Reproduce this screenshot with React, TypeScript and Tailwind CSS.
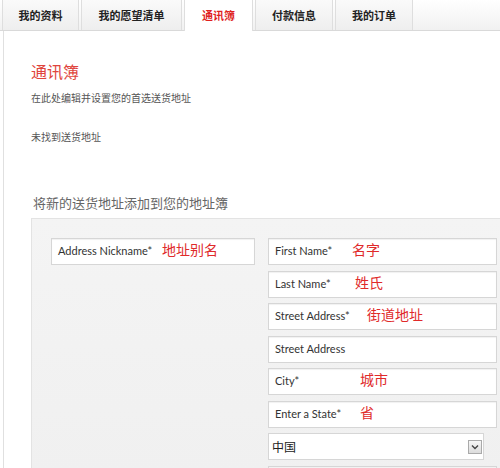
import React from "react";

const tabs = [
  { label: "我的资料", w: "w-[77px]", active: false },
  { label: "我的愿望清单", w: "w-[101px]", active: false },
  { label: "通讯簿", w: "w-[69px]", active: true },
  { label: "付款信息", w: "w-[78px]", active: false },
  { label: "我的订单", w: "w-[78px]", active: false },
];

const cjk = "font-['Noto_Sans_CJK_SC',sans-serif]";
const lat = "font-['Lato','Noto_Sans_CJK_SC',sans-serif]";

function Field({ label, note, offset }: { label: string; note?: string; offset?: string }) {
  return (
    <div className="relative flex h-[27px] shrink-0 items-center border border-[#d6d6d6] bg-white pl-[6px] shadow-[inset_0_1px_1px_rgba(0,0,0,0.06)]">
      <span className={`${lat} text-[11px] text-[#333]`}>{label}</span>
      {note && (
        <span className={`absolute top-[1px] ${offset} ${cjk} text-[14px] leading-[18px] text-[#e02a2a]`}>{note}</span>
      )}
    </div>
  );
}

export default function App() {
  return (
    <div className="h-[468px] w-[500px] overflow-hidden bg-white">
      <div className="flex h-[31px] items-stretch border-b border-[#d9d9d9] bg-gradient-to-b from-white to-[#f1f1f1] pl-[2px]">
        {tabs.map((t, i) => (
          <div
            key={t.label}
            className={`${t.w} ${i > 0 ? "ml-[2px]" : ""} flex items-center justify-center border-x border-[#dedede] ${
              t.active ? "-mb-px bg-white text-[#e01f1f]" : "bg-gradient-to-b from-[#fafafa] to-[#eeeeee] text-[#222]"
            } ${cjk} text-[11px] font-bold`}
          >
            {t.label}
          </div>
        ))}
      </div>
      <div className="ml-[3px] h-full border-l border-[#e0e0e0] pl-[27px]">
        <div className={`${cjk} pt-[30px] text-[16px] leading-[20px] text-[#e0453d]`}>通讯簿</div>
        <div className={`${cjk} mt-[10px] text-[10px] leading-[14px] text-[#555]`}>在此处编辑并设置您的首选送货地址</div>
        <div className={`${cjk} mt-[25px] text-[10px] leading-[14px] text-[#555]`}>未找到送货地址</div>
        <div className={`${cjk} ml-[2px] mt-[50px] text-[13px] leading-[18px] text-[#666]`}>将新的送货地址添加到您的地址簿</div>
        <div className="mt-[6px] flex h-[320px] items-start gap-[13px] border-l border-t border-[#e3e3e3] bg-gradient-to-b from-[#f4f4f4] to-[#efefef] pl-[19px] pt-[19px]">
          <div className="w-[204px]">
            <Field label="Address Nickname*" note="地址别名" offset="left-[110px]" />
          </div>
          <div className="flex w-[229px] flex-col gap-[5.5px]">
            <Field label="First Name*" note="名字" offset="left-[83px]" />
            <Field label="Last Name*" note="姓氏" offset="left-[86px]" />
            <Field label="Street Address*" note="街道地址" offset="left-[98px]" />
            <Field label="Street Address" />
            <Field label="City*" note="城市" offset="left-[91px]" />
            <Field label="Enter a State*" note="省" offset="left-[91px]" />
            <div className="flex h-[27px] w-[216px] shrink-0 items-center justify-between border border-[#d6d6d6] bg-white pl-[3px] pr-[1px]">
              <span className={`${cjk} text-[12px] text-[#222]`}>中国</span>
              <span className="flex h-[14px] w-[14px] items-center justify-center border border-[#aaa] bg-gradient-to-b from-[#f6f6f6] to-[#dcdcdc]">
                <svg width="8" height="6" viewBox="0 0 8 6">
                  <path d="M1 1.5 L4 4.5 L7 1.5" fill="none" stroke="#444" strokeWidth="1.4" />
                </svg>
              </span>
            </div>
            <Field label="" />
          </div>
        </div>
      </div>
    </div>
  );
}
